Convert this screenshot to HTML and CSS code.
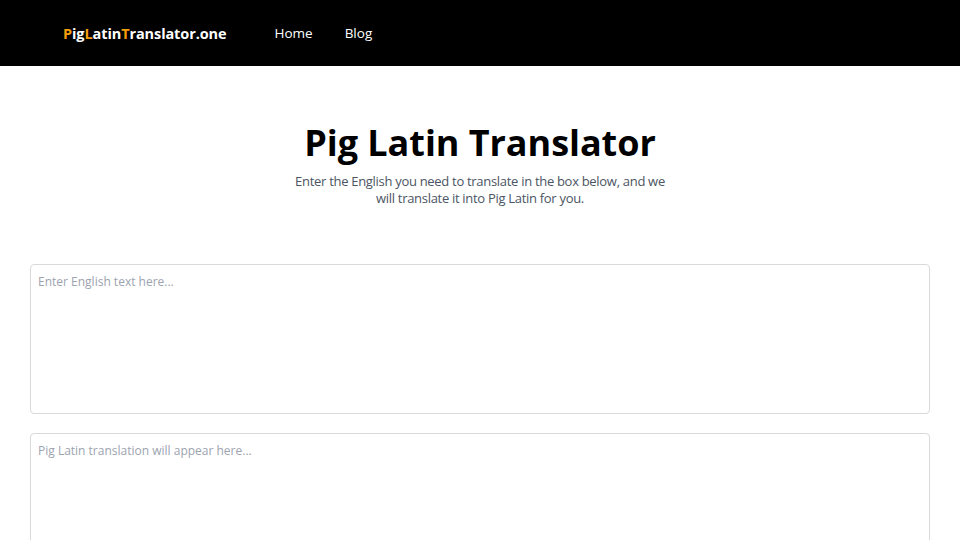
FILE: index.html
```html
<!DOCTYPE html>
<html lang="en">
<head>
<meta charset="utf-8">
<title>Pig Latin Translator</title>
<link rel="stylesheet" href="styles.css">
</head>
<body>
<header class="topbar">
  <a class="logo" href="#"><span class="accent">P</span>ig<span class="accent">L</span>atin<span class="accent">T</span>ranslator.one</a>
  <nav class="nav">
    <a href="#">Home</a>
    <a href="#">Blog</a>
  </nav>
</header>
<main class="main">
  <section class="hero">
    <h1 class="title">Pig Latin Translator</h1>
    <p class="subtitle">Enter the English you need to translate in the box below, and we will translate it into Pig Latin for you.</p>
  </section>
  <section class="boxes">
    <textarea class="box" placeholder="Enter English text here..."></textarea>
    <textarea class="box" placeholder="Pig Latin translation will appear here..." readonly></textarea>
  </section>
</main>
</body>
</html>
```

FILE: styles.css
```css
* { box-sizing: border-box; }
html, body { margin: 0; padding: 0; }
body {
  font-family: "Open Sans", "Noto Sans", "Liberation Sans", sans-serif;
  background: #ffffff;
  color: #000;
}
.topbar {
  height: 66px;
  background: #000;
  display: flex;
  align-items: center;
  padding-left: 63px;
}
.logo {
  color: #fff;
  text-decoration: none;
  font-weight: 700;
  font-size: 14.5px;
  letter-spacing: -0.1px;
}
.logo .accent { color: #f59e0b; }
.nav {
  display: flex;
  gap: 32px;
  margin-left: 48px;
}
.nav a {
  color: #fff;
  text-decoration: none;
  font-size: 13.5px;
}
.main {
  padding: 0 30px;
}
.hero {
  display: flex;
  flex-direction: column;
  align-items: center;
  padding-top: 55px;
}
.title {
  margin: 0;
  font-size: 36px;
  font-weight: 700;
  line-height: 44px;
  letter-spacing: -0.05px;
}
.subtitle {
  margin: 8px 0 0;
  max-width: 384px;
  text-align: center;
  font-size: 13px;
  line-height: 17px;
  letter-spacing: -0.3px;
  color: #4b5563;
}
.boxes {
  display: flex;
  flex-direction: column;
  gap: 19px;
  margin-top: 57px;
}
.box {
  display: block;
  width: 100%;
  height: 150px;
  border: 1px solid #d9d9d9;
  border-radius: 4px;
  padding: 8px 7px;
  font-family: inherit;
  font-size: 12px;
  line-height: 18px;
  resize: none;
  outline: none;
  color: #111;
}
.box::placeholder { color: #9ca3af; }
```
